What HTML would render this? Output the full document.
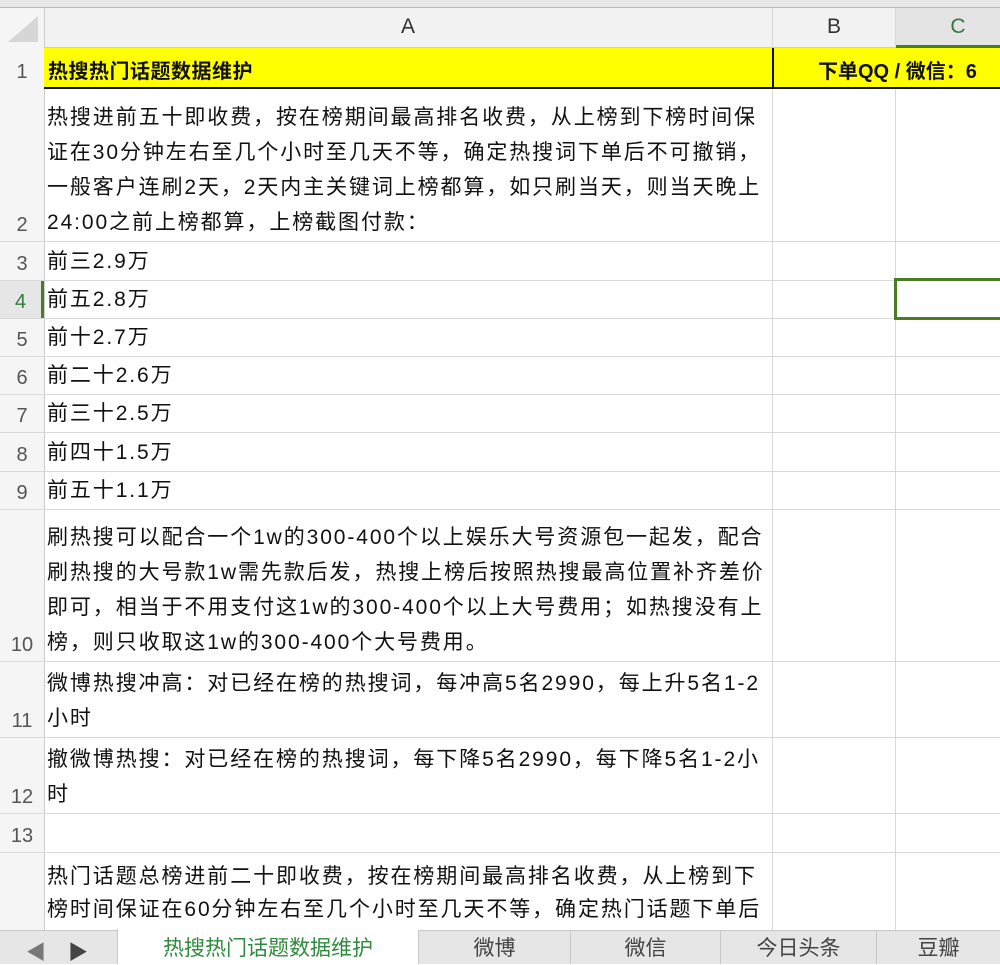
<!DOCTYPE html><html><head><meta charset="utf-8"><style>
*{margin:0;padding:0;box-sizing:border-box}
body{width:1000px;height:964px;overflow:hidden;background:#fff;font-family:"Liberation Sans","Noto Sans CJK SC",sans-serif;position:relative}
.a{position:absolute}
.h{background:#f2f2f2}
.vl{position:absolute;top:8px;width:1px;height:922px;background:#d9d9d9}
.hl{position:absolute;left:0;width:1000px;height:1px;background:#d9d9d9}
.rn{position:absolute;left:0;width:44px;text-align:center;font-size:20px;color:#555;background:#f5f5f5;display:flex;align-items:flex-end;justify-content:center;padding-bottom:4px}
.c{position:absolute;left:47px;width:740px;font-size:21px;letter-spacing:1.9px;line-height:35px;color:#111;display:flex;align-items:flex-end;padding-bottom:1px;white-space:nowrap}
.tab{position:absolute;top:930px;height:34px;font-size:21px;color:#444;display:flex;align-items:center;justify-content:center;border-left:1px solid #c8c8c8}
</style></head><body>
<div class="a" style="left:0;top:0;width:1000px;height:8px;background:#e8e8e8;border-bottom:1px solid #bbb"></div>
<div class="a h" style="left:0;top:8px;width:1000px;height:40px;border-bottom:1px solid #ccc"></div>
<div class="a" style="left:0;top:8px;width:44px;height:922px;background:#f5f5f5"></div>
<svg class="a" style="left:4px;top:14px" width="36" height="30"><polygon points="34,2 34,28 4,28" fill="#d6d6d6"/></svg>
<div class="a" style="left:44px;top:15px;width:728px;text-align:center;font-size:21px;color:#333">A</div>
<div class="a" style="left:772px;top:15px;width:124px;text-align:center;font-size:21px;color:#333">B</div>
<div class="a" style="left:896px;top:8px;width:104px;height:40px;background:#e4e4e4;border-bottom:3px solid #4a7c23"></div>
<div class="a" style="left:896px;top:15px;width:124px;text-align:center;font-size:21px;color:#2f7b3d">C</div>
<div class="vl" style="left:44px;background:#ccc"></div>
<div class="vl" style="left:772px"></div>
<div class="vl" style="left:895px"></div>
<div class="a" style="left:44px;top:48px;width:956px;height:40px;background:#ffff00"></div>
<div class="a" style="left:772px;top:48px;width:2px;height:40px;background:#111"></div>
<div class="a" style="left:44px;top:87px;width:956px;height:2px;background:#111"></div>
<div class="a" style="left:48px;top:55px;font-size:20px;font-weight:bold;color:#111;letter-spacing:0.5px">热搜热门话题数据维护</div>
<div class="a" style="left:818px;top:55px;font-size:20px;font-weight:bold;color:#111;white-space:nowrap">下单QQ / 微信：6</div>
<div class="rn" style="top:48px;height:40px">1</div>
<div class="hl" style="top:241px"></div><div class="hl" style="top:280px"></div><div class="hl" style="top:318px"></div><div class="hl" style="top:356px"></div><div class="hl" style="top:394px"></div><div class="hl" style="top:432px"></div><div class="hl" style="top:471px"></div><div class="hl" style="top:509px"></div><div class="hl" style="top:661px"></div><div class="hl" style="top:737px"></div><div class="hl" style="top:813px"></div><div class="hl" style="top:852px"></div>
<div class="rn" style="top:89px;height:152px">2</div>
<div class="rn" style="top:242px;height:38px">3</div>
<div class="rn" style="top:281px;height:37px;color:#2f7b3d;background:#e6e6e6;border-right:3px solid #4a7c23">4</div>
<div class="rn" style="top:319px;height:37px">5</div>
<div class="rn" style="top:357px;height:37px">6</div>
<div class="rn" style="top:395px;height:37px">7</div>
<div class="rn" style="top:433px;height:38px">8</div>
<div class="rn" style="top:472px;height:37px">9</div>
<div class="rn" style="top:510px;height:151px">10</div>
<div class="rn" style="top:662px;height:75px">11</div>
<div class="rn" style="top:738px;height:75px">12</div>
<div class="rn" style="top:814px;height:38px">13</div>
<div class="c" style="top:89px;height:152px"><div>热搜进前五十即收费，按在榜期间最高排名收费，从上榜到下榜时间保<br>证在30分钟左右至几个小时至几天不等，确定热搜词下单后不可撤销，<br>一般客户连刷2天，2天内主关键词上榜都算，如只刷当天，则当天晚上<br>24:00之前上榜都算，上榜截图付款：</div></div>
<div class="c" style="top:242px;height:38px">前三2.9万</div>
<div class="c" style="top:281px;height:37px">前五2.8万</div>
<div class="c" style="top:319px;height:37px">前十2.7万</div>
<div class="c" style="top:357px;height:37px">前二十2.6万</div>
<div class="c" style="top:395px;height:37px">前三十2.5万</div>
<div class="c" style="top:433px;height:38px">前四十1.5万</div>
<div class="c" style="top:472px;height:37px">前五十1.1万</div>
<div class="c" style="top:510px;height:151px"><div>刷热搜可以配合一个1w的300-400个以上娱乐大号资源包一起发，配合<br>刷热搜的大号款1w需先款后发，热搜上榜后按照热搜最高位置补齐差价<br>即可，相当于不用支付这1w的300-400个以上大号费用；如热搜没有上<br>榜，则只收取这1w的300-400个大号费用。</div></div>
<div class="c" style="top:662px;height:75px"><div>微博热搜冲高：对已经在榜的热搜词，每冲高5名2990，每上升5名1-2<br>小时</div></div>
<div class="c" style="top:738px;height:75px"><div>撤微博热搜：对已经在榜的热搜词，每下降5名2990，每下降5名1-2小<br>时</div></div>
<div class="a" style="left:47px;top:860px;font-size:21px;letter-spacing:1.9px;line-height:33px;color:#111;white-space:nowrap">热门话题总榜进前二十即收费，按在榜期间最高排名收费，从上榜到下<br>榜时间保证在60分钟左右至几个小时至几天不等，确定热门话题下单后</div>
<div class="a" style="left:894px;top:278px;width:110px;height:42px;border:3px solid #4a7c23"></div>
<div class="a" style="left:0;top:930px;width:1000px;height:34px;background:#e6e6e6;border-top:1px solid #c8c8c8"></div>
<div class="a" style="left:26px;top:936px;font-size:20px;color:#777">◀</div>
<div class="a" style="left:68px;top:936px;font-size:20px;color:#444">▶</div>
<div class="tab" style="left:117px;width:301px;background:#fff;color:#2f8a3d;top:929px;height:35px">热搜热门话题数据维护</div>
<div class="tab" style="left:418px;width:152px">微博</div>
<div class="tab" style="left:570px;width:150px">微信</div>
<div class="tab" style="left:720px;width:156px">今日头条</div>
<div class="tab" style="left:876px;width:124px">豆瓣</div>
</body></html>
